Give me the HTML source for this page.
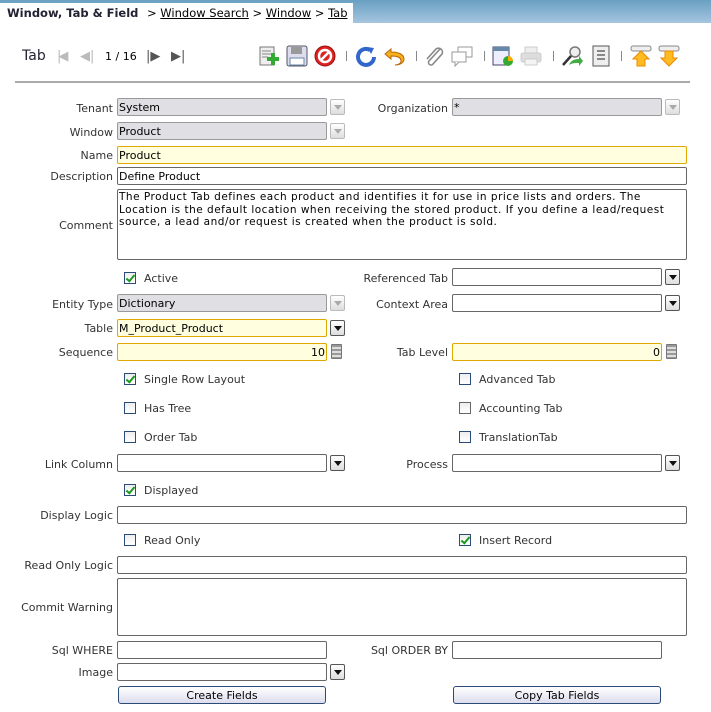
<!DOCTYPE html>
<html><head><meta charset="utf-8"><style>
*{box-sizing:border-box;margin:0;padding:0}
body{width:711px;height:712px;background:#fff;font-family:"DejaVu Sans","Liberation Sans",sans-serif;font-size:11px;color:#222;position:relative;overflow:hidden}
.a{position:absolute}
.lbl{position:absolute;text-align:right;white-space:nowrap;color:#333;margin-top:1px}
.f{position:absolute;border:1px solid #666;border-radius:2px;background:#fff;height:18px;padding:1px 1px;line-height:15px;white-space:nowrap;overflow:hidden;color:#000}
.ro{background:#e0e0e4;border-color:#999}
.mand{background:#ffffe0;border-color:#e0a800}
.dd{position:absolute;width:15px;height:16px;border:1px solid #555;border-radius:2px;background:linear-gradient(#fff,#ddd)}
.dd:after{content:"";position:absolute;left:3px;top:5px;border-left:4px solid transparent;border-right:4px solid transparent;border-top:5px solid #111}
.dd.dis{border-color:#bbb}.dd.dis:after{border-top-color:#aaa}
.cb{position:absolute;width:12px;height:12px;border:1px solid #2a4a78;background:linear-gradient(#eee,#fff)}
.cb.g{border-color:#666}
.cb.on:after{content:"";position:absolute;left:3px;top:0px;width:3px;height:7px;border:solid #1a9a1a;border-width:0 2px 2px 0;transform:rotate(40deg)}
.ct{position:absolute;white-space:nowrap;color:#333;margin-top:1px}
.calc{position:absolute;width:11px;height:15px;border:1px solid #777;background:repeating-linear-gradient(#999 0 2px,#ddd 2px 4px);border-radius:1px}
.btn{position:absolute;height:18px;border:1px solid #2a4a78;border-radius:3px;background:linear-gradient(#fff,#dde);text-align:center;line-height:17px;color:#000}
.ic{position:absolute;top:45px;width:22px;height:22px}
.sep{position:absolute;top:51px;width:1px;height:10px;background:#888}
</style></head><body>
<div class="a" style="left:0;top:0;width:711px;height:23px;background:linear-gradient(#6aa0c2,#a5c5e0)"></div>
<div class="a" style="left:0;top:3px;width:353px;height:20px;background:#fff"></div>
<div class="a" style="left:7px;top:6px;font-weight:bold;color:#223;font-size:11.5px">Window, Tab &amp; Field</div>
<div class="a" style="left:147px;top:6px;font-size:11.5px;color:#000">&gt; <u>Window Search</u> &gt; <u>Window</u> &gt; <u>Tab</u></div>

<div class="a" style="left:22px;top:48px;font-size:14px;color:#223">Tab</div>
<div class="a" style="left:57px;top:49px;color:#bbb;font-size:13px;letter-spacing:-3px">|◀</div>
<div class="a" style="left:80px;top:49px;color:#bbb;font-size:13px">◀|</div>
<div class="a" style="left:105px;top:50px;color:#000">1 / 16</div>
<div class="a" style="left:146px;top:49px;color:#555;font-size:13px">|▶</div>
<div class="a" style="left:171px;top:49px;color:#555;font-size:13px">▶|</div>
<svg class="ic" style="left:258px" viewBox="0 0 22 22"><rect x="2" y="2" width="14" height="18" fill="#eee" stroke="#777"/><path d="M4 6h9M4 9h9M4 12h6" stroke="#888"/><path d="M15 8v12M9 14h12" stroke="#3a3" stroke-width="4"/></svg>
<svg class="ic" style="left:286px" viewBox="0 0 22 22"><rect x="1" y="1" width="20" height="20" rx="2" fill="#dde" stroke="#556"/><rect x="5" y="2" width="11" height="7" fill="#999"/><rect x="4" y="13" width="14" height="7" fill="#fff" stroke="#68a"/></svg>
<svg class="ic" style="left:314px" viewBox="0 0 22 22"><circle cx="11" cy="11" r="10" fill="#d22" stroke="#911"/><circle cx="11" cy="11" r="6" fill="none" stroke="#fff" stroke-width="2.5"/><path d="M7 15L15 7" stroke="#fff" stroke-width="2.5"/></svg>
<div class="sep" style="left:346px"></div>
<svg class="ic" style="left:355px" viewBox="0 0 22 22"><path d="M15 5A8 8 0 1 0 19 12" fill="none" stroke="#36c" stroke-width="4"/><path d="M12 2l7 1-3 6z" fill="#36c"/></svg>
<svg class="ic" style="left:383px" viewBox="0 0 22 22"><path d="M8 4L2 9l6 5v-3c6 0 10 1 10 5 0 3-4 4-6 4 6 0 9-3 9-6 0-5-6-7-13-7z" fill="#f5b020" stroke="#b60"/></svg>
<div class="sep" style="left:416px"></div>
<svg class="ic" style="left:423px" viewBox="0 0 22 22"><path d="M17 4l-11 12a2.5 2.5 0 0 0 4 3l9-10a4 4 0 0 0-6-5L4 14" fill="none" stroke="#888" stroke-width="1.6"/></svg>
<svg class="ic" style="left:451px" viewBox="0 0 22 22"><rect x="7" y="2" width="14" height="10" fill="#fff" stroke="#999"/><rect x="1" y="7" width="14" height="10" fill="#fff" stroke="#999"/><path d="M4 17l0 4 4-4" fill="#fff" stroke="#999"/></svg>
<div class="sep" style="left:484px"></div>
<svg class="ic" style="left:492px" viewBox="0 0 22 22"><rect x="1" y="2" width="16" height="18" fill="#eef" stroke="#446"/><rect x="1" y="2" width="16" height="4" fill="#68a"/><circle cx="16" cy="16" r="5" fill="#3a3"/><path d="M16 16V11a5 5 0 0 1 5 5z" fill="#fa0"/></svg>
<svg class="ic" style="left:520px" viewBox="0 0 22 22"><rect x="5" y="2" width="12" height="7" fill="#eee" stroke="#ccc"/><rect x="1" y="8" width="20" height="9" rx="2" fill="#ddd" stroke="#ccc"/><rect x="5" y="14" width="12" height="6" fill="#f4f4f4" stroke="#ccc"/></svg>
<div class="sep" style="left:553px"></div>
<svg class="ic" style="left:561px" viewBox="0 0 22 22"><circle cx="14" cy="7" r="5" fill="#eee" stroke="#777" stroke-width="1.5"/><path d="M10 11L2 20" stroke="#333" stroke-width="2.5"/><path d="M8 20c2-5 6-6 10-6v-3l4 5-4 5v-3c-4 0-7 0-10 2z" fill="#4a4"/></svg>
<svg class="ic" style="left:590px" viewBox="0 0 22 22"><rect x="3" y="1" width="16" height="20" fill="#eee" stroke="#555"/><path d="M7 6h8M7 10h8M7 14h8" stroke="#888" stroke-width="2"/></svg>
<div class="sep" style="left:621px"></div>
<svg class="ic" style="left:630px" viewBox="0 0 22 22"><rect x="1" y="1" width="20" height="5" rx="2" fill="#eee" stroke="#888"/><path d="M11 6l8 8h-4v7H7v-7H3z" fill="#fb2" stroke="#e80"/></svg>
<svg class="ic" style="left:658px" viewBox="0 0 22 22"><rect x="1" y="1" width="20" height="5" rx="2" fill="#eee" stroke="#888"/><path d="M11 21l8-8h-4V6H7v7H3z" fill="#fb2" stroke="#e80"/></svg>
<div class="a" style="left:15px;top:81px;width:675px;height:2px;background:#aaa"></div>

<div class="lbl" style="right:598px;top:101px">Tenant</div>
<div class="f ro" style="left:117px;top:98px;width:210px">System</div><div class="dd dis" style="left:330px;top:99px"></div>
<div class="lbl" style="right:263px;top:101px">Organization</div>
<div class="f ro" style="left:452px;top:98px;width:210px">*</div><div class="dd dis" style="left:665px;top:99px"></div>

<div class="lbl" style="right:598px;top:125px">Window</div>
<div class="f ro" style="left:117px;top:122px;width:210px">Product</div><div class="dd dis" style="left:330px;top:123px"></div>

<div class="lbl" style="right:598px;top:148px">Name</div>
<div class="f mand" style="left:117px;top:146px;width:570px">Product</div>
<div class="lbl" style="right:598px;top:169px">Description</div>
<div class="f" style="left:117px;top:167px;width:570px">Define Product</div>
<div class="lbl" style="right:598px;top:218px">Comment</div>
<div class="f" style="left:117px;top:189px;width:570px;height:71px;white-space:normal;font-size:10.5px;letter-spacing:0.5px;line-height:12.5px;padding:1px 4px 1px 1px">The Product Tab defines each product and identifies it for use in price lists and orders. The Location is the default location when receiving the stored product. If you define a lead/request source, a lead and/or request is created when the product is sold.</div>

<div class="cb on" style="left:124px;top:272px"></div><div class="ct" style="left:144px;top:271px">Active</div>
<div class="lbl" style="right:263px;top:271px">Referenced Tab</div>
<div class="f" style="left:452px;top:268px;width:210px"></div><div class="dd" style="left:665px;top:269px"></div>

<div class="lbl" style="right:598px;top:297px">Entity Type</div>
<div class="f ro" style="left:117px;top:294px;width:210px">Dictionary</div><div class="dd dis" style="left:330px;top:295px"></div>
<div class="lbl" style="right:263px;top:297px">Context Area</div>
<div class="f" style="left:452px;top:294px;width:210px"></div><div class="dd" style="left:665px;top:295px"></div>

<div class="lbl" style="right:598px;top:321px">Table</div>
<div class="f mand" style="left:117px;top:319px;width:210px">M_Product_Product</div><div class="dd" style="left:330px;top:320px"></div>

<div class="lbl" style="right:598px;top:345px">Sequence</div>
<div class="f mand" style="left:117px;top:343px;width:210px;text-align:right">10</div><div class="calc" style="left:331px;top:344px"></div>
<div class="lbl" style="right:263px;top:345px">Tab Level</div>
<div class="f mand" style="left:452px;top:343px;width:210px;text-align:right">0</div><div class="calc" style="left:666px;top:344px"></div>

<div class="cb on" style="left:124px;top:373px"></div><div class="ct" style="left:144px;top:372px">Single Row Layout</div>
<div class="cb" style="left:459px;top:373px"></div><div class="ct" style="left:479px;top:372px">Advanced Tab</div>
<div class="cb" style="left:124px;top:402px"></div><div class="ct" style="left:144px;top:401px">Has Tree</div>
<div class="cb g" style="left:459px;top:402px"></div><div class="ct" style="left:479px;top:401px">Accounting Tab</div>
<div class="cb" style="left:124px;top:431px"></div><div class="ct" style="left:144px;top:430px">Order Tab</div>
<div class="cb" style="left:459px;top:431px"></div><div class="ct" style="left:479px;top:430px">TranslationTab</div>

<div class="lbl" style="right:598px;top:457px">Link Column</div>
<div class="f" style="left:117px;top:454px;width:210px"></div><div class="dd" style="left:330px;top:455px"></div>
<div class="lbl" style="right:263px;top:457px">Process</div>
<div class="f" style="left:452px;top:454px;width:210px"></div><div class="dd" style="left:665px;top:455px"></div>

<div class="cb on" style="left:124px;top:484px"></div><div class="ct" style="left:144px;top:483px">Displayed</div>
<div class="lbl" style="right:598px;top:508px">Display Logic</div>
<div class="f" style="left:117px;top:506px;width:570px"></div>
<div class="cb" style="left:124px;top:534px"></div><div class="ct" style="left:144px;top:533px">Read Only</div>
<div class="cb on" style="left:459px;top:534px"></div><div class="ct" style="left:479px;top:533px">Insert Record</div>
<div class="lbl" style="right:598px;top:558px">Read Only Logic</div>
<div class="f" style="left:117px;top:556px;width:570px"></div>
<div class="lbl" style="right:598px;top:600px">Commit Warning</div>
<div class="f" style="left:117px;top:578px;width:570px;height:58px"></div>

<div class="lbl" style="right:598px;top:643px">Sql WHERE</div>
<div class="f" style="left:117px;top:641px;width:210px"></div>
<div class="lbl" style="right:263px;top:643px">Sql ORDER BY</div>
<div class="f" style="left:452px;top:641px;width:210px"></div>
<div class="lbl" style="right:598px;top:665px">Image</div>
<div class="f" style="left:117px;top:663px;width:210px"></div><div class="dd" style="left:330px;top:664px"></div>
<div class="btn" style="left:118px;top:686px;width:208px">Create Fields</div>
<div class="btn" style="left:453px;top:686px;width:208px">Copy Tab Fields</div>
</body></html>
